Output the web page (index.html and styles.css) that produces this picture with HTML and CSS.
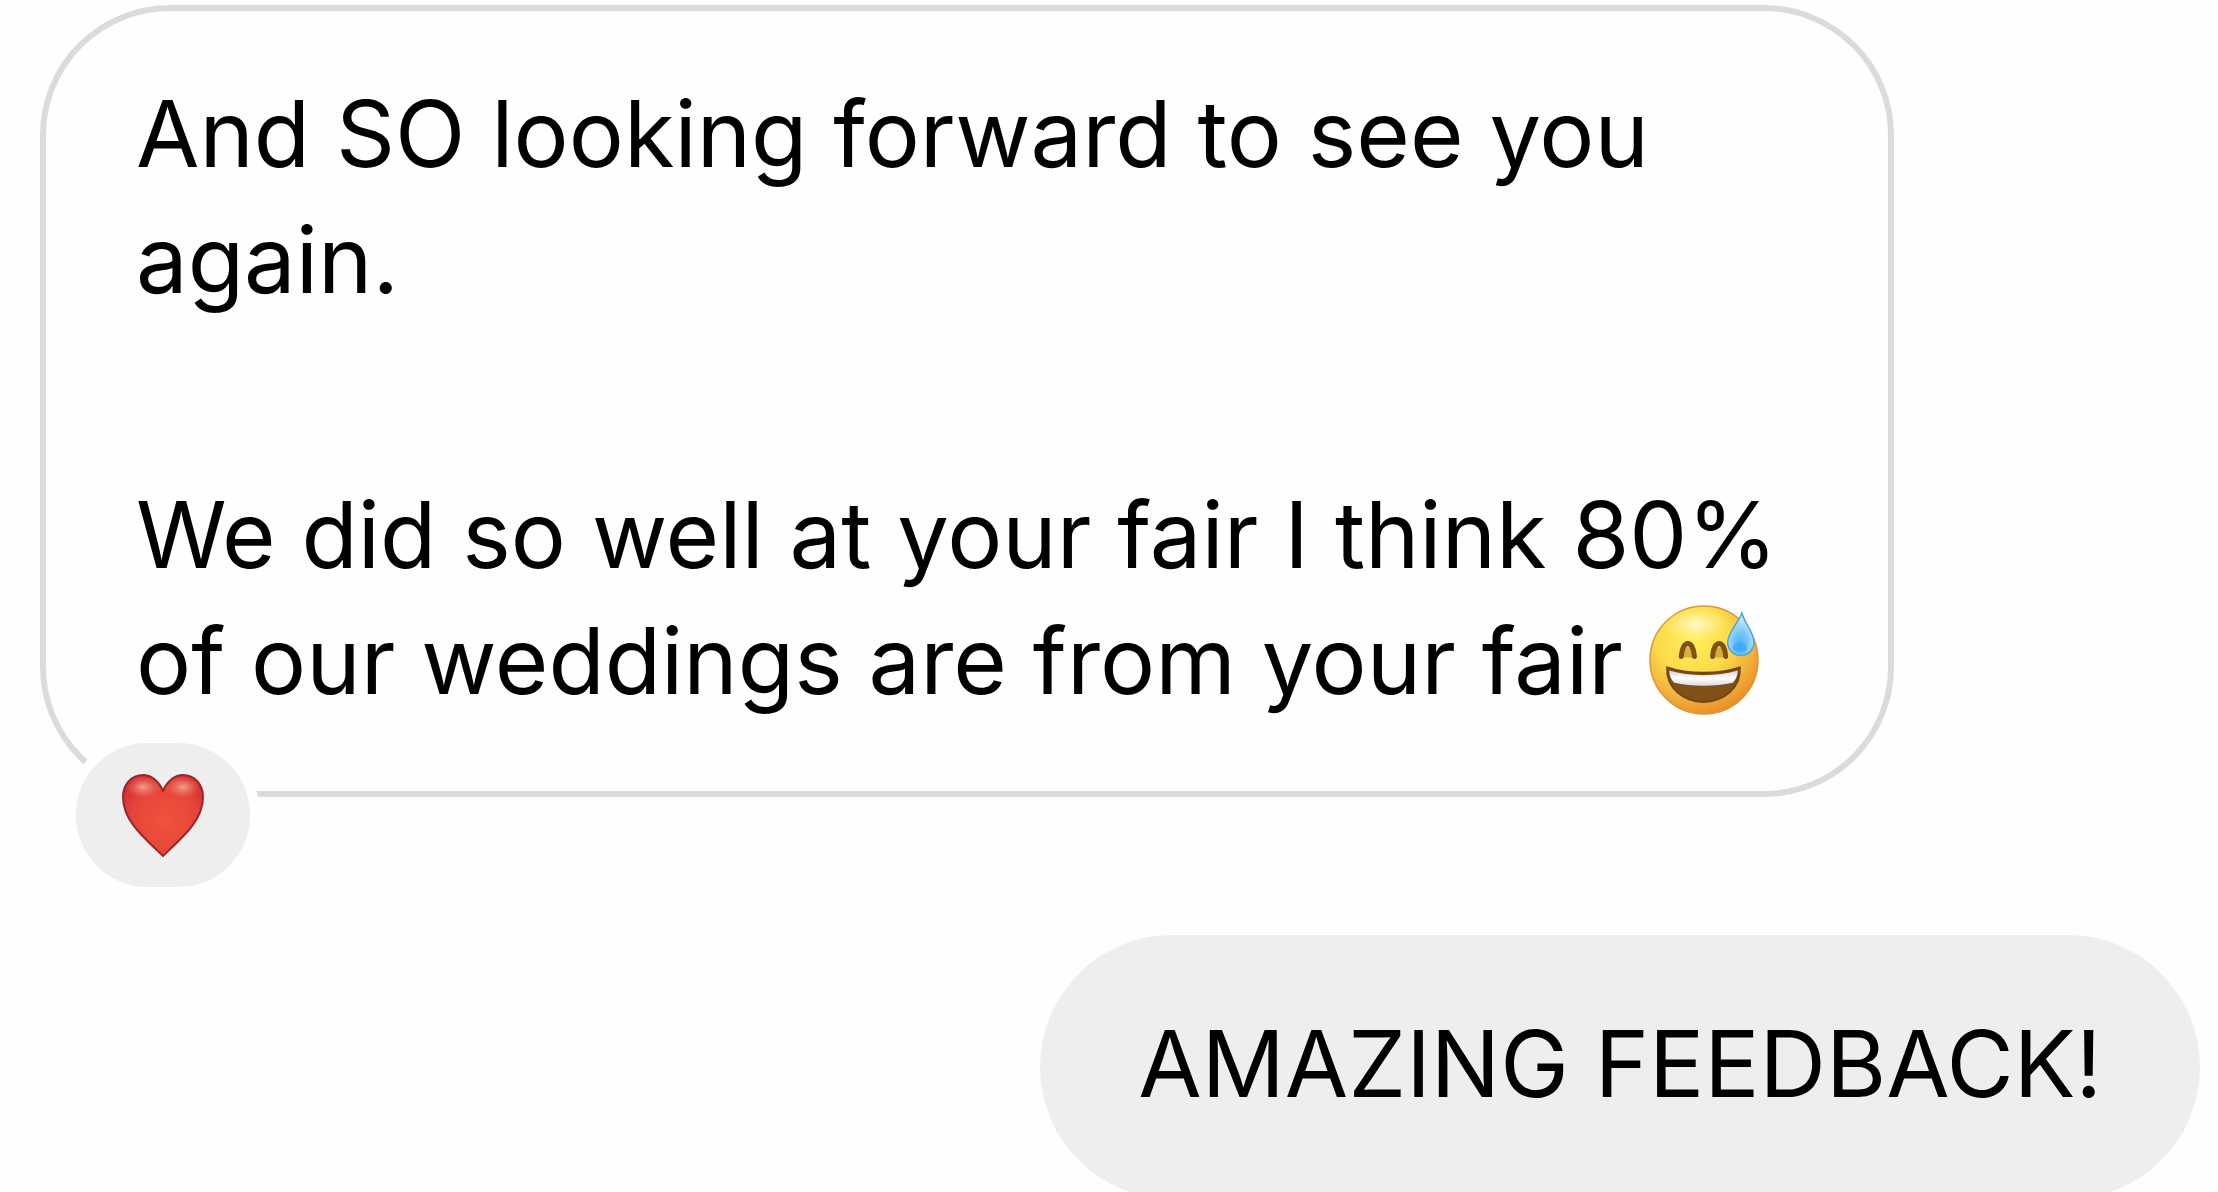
FILE: index.html
```html
<!DOCTYPE html>
<html lang="en">
<head>
  <meta charset="UTF-8">
  <meta name="viewport" content="width=device-width, initial-scale=1.0">
  <title>Messages</title>
  <link rel="stylesheet" href="styles.css">
</head>
<body>
  <main class="chat">
    <article class="message received">
      <p>And SO looking forward to see you again.</p>
      <p>We did so well at your fair I think 80% of our weddings are from your fair
        <svg class="emoji" viewBox="0 0 109 109" role="img" aria-label="grinning face with sweat">
          <defs>
            <radialGradient id="face" cx="0.4" cy="0.3" r="0.74">
              <stop offset="0" stop-color="#fff05c"/>
              <stop offset="0.45" stop-color="#fbdb4a"/>
              <stop offset="0.75" stop-color="#f4b13c"/>
              <stop offset="1" stop-color="#e58a24"/>
            </radialGradient>
            <radialGradient id="shine" cx="0.5" cy="0.5" r="0.5">
              <stop offset="0" stop-color="#fffbe0" stop-opacity="0.85"/>
              <stop offset="1" stop-color="#fff6a0" stop-opacity="0"/>
            </radialGradient>
            <linearGradient id="teeth" x1="0" y1="0" x2="0" y2="1">
              <stop offset="0" stop-color="#d5cfd8"/>
              <stop offset="0.5" stop-color="#ffffff"/>
              <stop offset="1" stop-color="#dcd8e2"/>
            </linearGradient>
            <radialGradient id="drop" cx="0.48" cy="0.74" r="0.62">
              <stop offset="0" stop-color="#49b4ff"/>
              <stop offset="0.4" stop-color="#6fc3fa"/>
              <stop offset="1" stop-color="#c3e8fa"/>
            </radialGradient>
          </defs>
          <circle cx="54.5" cy="54.5" r="53.5" fill="url(#face)" stroke="#d79a3c" stroke-width="1.5"/>
          <ellipse cx="47" cy="19" rx="33" ry="17" fill="url(#shine)"/>
          <path d="M33 47C35 40 42 40 44 47V52H33ZM64 47C66 40 73 40 75 47V52H64Z" fill="#c08a28" opacity="0.6"/>
          <path d="M32 51C33 34 44 34 45 51M63 51C64 34 75 34 76 51" fill="none" stroke="#80501a" stroke-width="5" stroke-linecap="round"/>
          <path d="M18 62C38 69 70 69 90 62C91 82 74 96 54 96S17 82 18 62Z" fill="#805015"/>
          <path d="M20 65C40 71 68 71 88 65C88 70 86 74 83 77C66 81 42 81 25 77C22 74 20 70 20 65Z" fill="url(#teeth)"/>
          <path d="M18 62C38 69 70 69 90 62C91 82 74 96 54 96S17 82 18 62Z" fill="none" stroke="#6d4717" stroke-width="2"/>
          <path d="M92 8C95 19 104 27 104 37A13 13 0 0 1 78 37C78 27 88 19 92 8Z" fill="url(#drop)" stroke="#4ba6da" stroke-width="1.5"/>
          <ellipse cx="90" cy="42" rx="7" ry="5" fill="#2f9ffa" opacity="0.55"/>
        </svg>
      </p>
      <button class="reaction" type="button" aria-label="Heart reaction">
        <svg class="heart" viewBox="0 0 82 83" aria-hidden="true">
          <defs>
            <radialGradient id="heartFill" cx="0.52" cy="0.56" r="0.62">
              <stop offset="0" stop-color="#ef523c"/>
              <stop offset="0.65" stop-color="#e6463a"/>
              <stop offset="1" stop-color="#cf2f32"/>
            </radialGradient>
            <radialGradient id="heartShine" cx="0.5" cy="0.5" r="0.5">
              <stop offset="0" stop-color="#f7a595" stop-opacity="0.9"/>
              <stop offset="1" stop-color="#f08070" stop-opacity="0"/>
            </radialGradient>
          </defs>
          <path d="M41 17C37 7 29 1 21 1C9 1 1 11 1 23C1 46 20 62 41 82C62 62 81 46 81 23C81 11 73 1 61 1C53 1 45 7 41 17Z" fill="url(#heartFill)" stroke="#97262d" stroke-width="2" stroke-linejoin="round"/>
          <ellipse cx="21" cy="13" rx="17" ry="11" fill="url(#heartShine)"/>
          <ellipse cx="61" cy="13" rx="17" ry="11" fill="url(#heartShine)"/>
        </svg>
      </button>
    </article>
    <article class="message sent">
      <p>AMAZING FEEDBACK!</p>
    </article>
  </main>
</body>
</html>
```

FILE: styles.css
```css
body {
  margin: 0;
  background: #fefefe;
  color: #000;
  font-family: Inter, "Liberation Sans", sans-serif;
  font-size: 92px;
  line-height: 126px;
  overflow: hidden;
}
.chat {
  display: flex;
  flex-direction: column;
  gap: 138px;
  padding: 5px 18px 0 40px;
}
.message p {
  margin: 0;
}
.message p + p {
  margin-top: 149px;
}
.received {
  position: relative;
  margin-right: 306px;
  padding: 60px 90px 67px;
  border: 6px solid #dbdbdb;
  border-radius: 130px;
}
.sent {
  align-self: flex-end;
  padding: 66px 98px 72px;
  background: #eee;
  border-radius: 132px;
}
.emoji {
  width: 110px;
  height: 110px;
  vertical-align: -21px;
}
/* sits over the bubble's bottom left corner */
.reaction {
  position: absolute;
  left: 20px;
  bottom: -106px;
  display: flex;
  align-items: center;
  justify-content: center;
  width: 194px;
  height: 164px;
  padding: 0;
  border: 10px solid #fefefe;
  border-radius: 82px;
  background: #eee;
  cursor: pointer;
}
.heart {
  width: 82px;
  height: 83px;
}
```
